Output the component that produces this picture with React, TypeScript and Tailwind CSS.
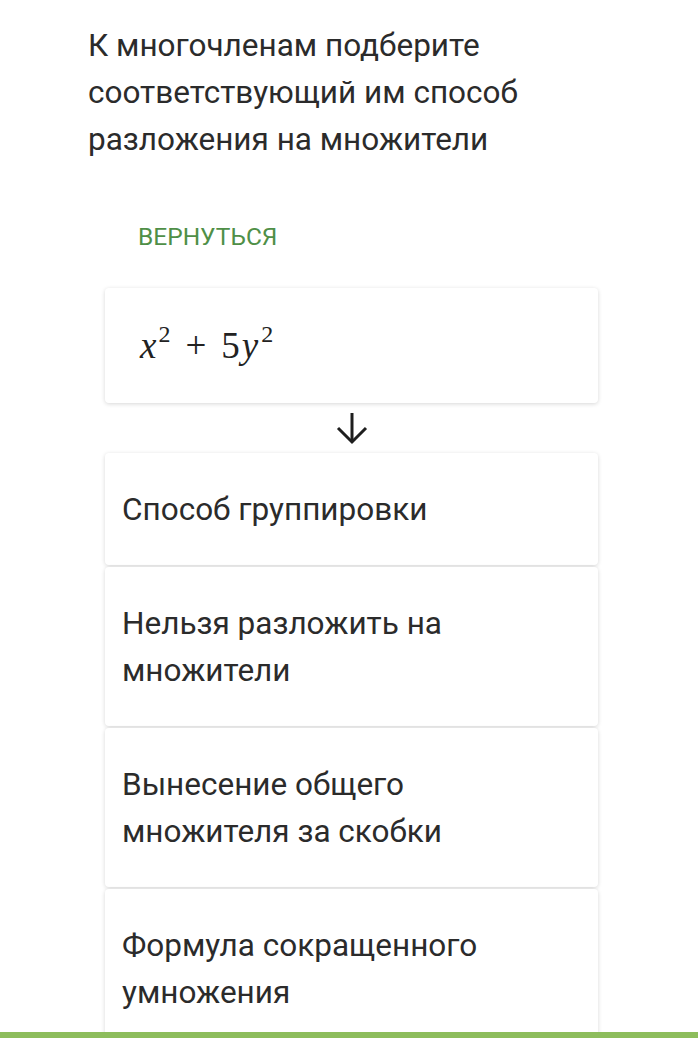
import React from "react";

const Card = ({ children }: { children: React.ReactNode }) => (
  <div className="bg-white rounded-[4px] shadow-[0_1px_4px_rgba(0,0,0,0.16)] px-[17px] py-[32.5px] text-[31.5px] leading-[47px] text-[#2b2b2b]">
    {children}
  </div>
);

export default function App() {
  return (
    <div
      className="relative w-[698px] h-[1038px] overflow-hidden bg-white"
      style={{ fontFamily: "Roboto, 'Noto Sans', sans-serif" }}
    >
      <div className="pl-[88px] pr-[20px] pt-[22px] text-[31.5px] leading-[47px] text-[#2b2b2b]">
        К многочленам подберите
        <br />
        соответствующий им способ
        <br />
        разложения на множители
      </div>

      <div className="pl-[138px] mt-[59px] text-[24.5px] leading-[30px] text-[#4f8f47]">
        ВЕРНУТЬСЯ
      </div>

      <div className="ml-[105px] w-[493px] mt-[36px] flex flex-col">
        <div className="bg-white rounded-[4px] shadow-[0_1px_4px_rgba(0,0,0,0.16)] h-[115px] flex items-center pl-[35px]">
          <span
            className="text-[37px] leading-[40px] text-[#222] flex items-start"
            style={{ fontFamily: "'Liberation Serif', 'DejaVu Serif', serif" }}
          >
            <i>x</i>
            <span className="text-[24px] leading-[24px] ml-[2px] mt-[-4px]">2</span>
            <span className="mx-[15px]">+</span>
            <span>5</span>
            <i className="ml-[2px]">y</i>
            <span className="text-[24px] leading-[24px] ml-[3px] mt-[-4px]">2</span>
          </span>
        </div>

        <div className="flex justify-center h-[50px] items-center">
          <svg width="34" height="34" viewBox="0 0 34 34" fill="none" stroke="#1e1e1e" strokeWidth="3" strokeLinecap="butt">
            <path d="M17 2 V31" />
            <path d="M3 17 L17 31 L31 17" />
          </svg>
        </div>

        <div className="flex flex-col gap-[2px]">
          <Card>Способ группировки</Card>
          <Card>
            Нельзя разложить на
            <br />
            множители
          </Card>
          <Card>
            Вынесение общего
            <br />
            множителя за скобки
          </Card>
          <Card>
            Формула сокращенного
            <br />
            умножения
          </Card>
        </div>
      </div>

      <div className="absolute left-0 right-0 bottom-0 h-[6px] bg-[#8dbd5c]" />
    </div>
  );
}
